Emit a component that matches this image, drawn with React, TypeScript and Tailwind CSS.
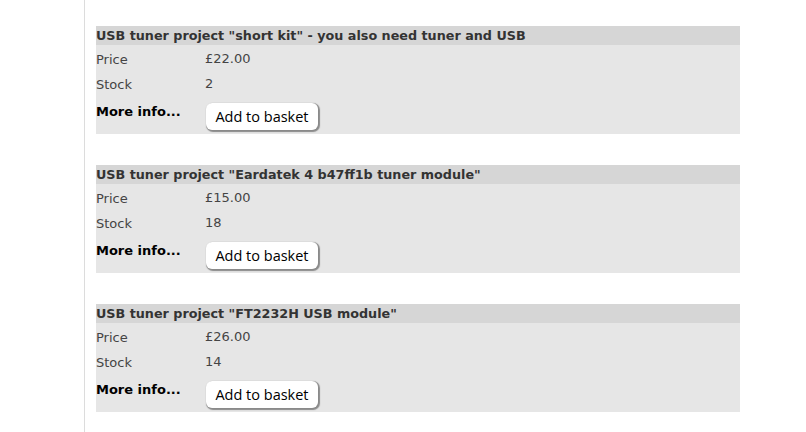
import React from 'react';

const items = [
  { title: 'USB tuner project "short kit" - you also need tuner and USB', price: '£22.00', stock: '2' },
  { title: 'USB tuner project "Eardatek 4 b47ff1b tuner module"', price: '£15.00', stock: '18' },
  { title: 'USB tuner project "FT2232H USB module"', price: '£26.00', stock: '14' },
];

const Product = ({ title, price, stock }: { title: string; price: string; stock: string }) => (
  <div className="w-[644px] bg-[#e6e6e6] text-[13px] text-[#444]">
    <div className="h-[19px] bg-[#d6d6d6] text-[12.75px] font-bold leading-[19px] text-[#333]">{title}</div>
    <div className="grid grid-cols-[109px_1fr] pt-[2px]">
      <div className="h-[25px] pt-[5px] leading-[16px]">Price</div>
      <div className="h-[25px] pt-[4px] leading-[16px]">{price}</div>
      <div className="h-[25px] pt-[5px] leading-[16px]">Stock</div>
      <div className="h-[25px] pt-[4px] leading-[16px]">{stock}</div>
      <div className="pt-[7px] font-bold leading-[16px] text-black">More info...</div>
      <div className="pt-[6px] pb-[3.5px]">
        <button className="ml-[1px] h-[27px] w-[112px] rounded-[6px] bg-white font-['Open_Sans',sans-serif] text-[14.5px] leading-[27px] text-black shadow-[1px_1px_1px_1px_#8a8a8a]">
          Add to basket
        </button>
      </div>
    </div>
  </div>
);

export default function App() {
  return (
    <div className="h-[432px] w-[806px] overflow-hidden bg-white font-['DejaVu_Sans',Verdana,sans-serif]">
      <div className="ml-[84px] h-full border-l border-[#dcdcdc] pl-[11px] pt-[26px]">
        <div className="flex flex-col gap-[31.5px]">
          {items.map((it) => (
            <Product key={it.title} {...it} />
          ))}
        </div>
      </div>
    </div>
  );
}
